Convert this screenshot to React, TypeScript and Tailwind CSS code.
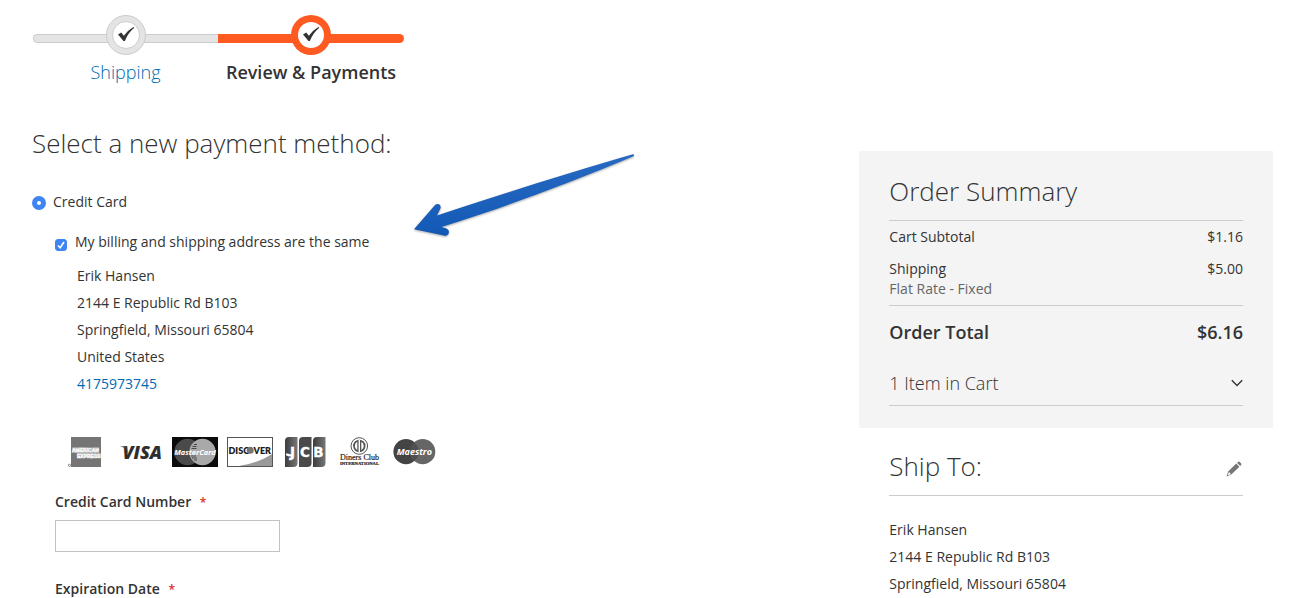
import React, { useState } from 'react';

const address = ['Erik Hansen', '2144 E Republic Rd B103', 'Springfield, Missouri 65804'];

function StepCheck() {
  return (
    <svg viewBox="0 0 18 16" className="mb-0.5 h-4 w-[18px]" aria-hidden="true">
      <path d="M1 8.400 4.200 6.600 6.900 9.800C9.200 6.400 12.300 3.200 16.600.9L17.300 1.800C13 5.400 10.200 9.300 7.900 14.900L6.500 14.900Z" fill="#333" />
    </svg>
  );
}

function Steps() {
  return (
    <ol className="flex pl-px text-lg leading-6">
      <li className="flex w-[185px] flex-col items-center">
        <div className="grid w-full items-center justify-items-center">
          <span className="col-start-1 row-start-1 mt-[7px] h-[9px] w-full rounded-l-md border border-r-0 border-[#ccc] bg-[#e4e4e4]" />
          <span className="col-start-1 row-start-1 flex size-10 items-center justify-center rounded-full border border-[#ccc] bg-[#e4e4e4]">
            <span className="flex size-7 items-center justify-center rounded-full border border-[#ccc] bg-white">
              <StepCheck />
            </span>
          </span>
        </div>
        <a href="#shipping" className="mt-[5px] font-light text-[#006bb4]">Shipping</a>
      </li>
      <li className="flex w-[186px] flex-col items-center" aria-current="step">
        <div className="grid w-full items-center justify-items-center">
          <span className="col-start-1 row-start-1 mt-[7px] h-[9px] w-full rounded-r-md bg-[#ff5a22]" />
          <span className="col-start-1 row-start-1 flex size-10 items-center justify-center rounded-full bg-[#ff5a22]">
            <span className="flex size-[26px] items-center justify-center rounded-full bg-white">
              <StepCheck />
            </span>
          </span>
        </div>
        <span className="mt-[5px] whitespace-nowrap font-semibold">Review &amp; Payments</span>
      </li>
    </ol>
  );
}

function Arrow() {
  return (
    <svg
      viewBox="410 150 230 92"
      className="pointer-events-none absolute left-[378px] top-[66px] h-[92px] w-[230px] drop-shadow-[0_1px_1px_rgba(0,0,0,0.35)]"
      aria-hidden="true"
    >
      <defs>
        <linearGradient id="arrow" x1="0" y1="0" x2="0.25" y2="1">
          <stop offset="0" stopColor="#2f6fc6" />
          <stop offset="1" stopColor="#1057b4" />
        </linearGradient>
      </defs>
      <path
        d="M414 229.300 434.800 205.200C437.500 202.400 442 204.800 440.300 208.800L437 215.500C500 195 570 172 633 154.200Q635 154.500 633.500 156.200C570 183 505 207 441.500 227L446.500 228.600C450.500 230.200 449.200 236 445 235.800Z"
        fill="url(#arrow)"
      />
    </svg>
  );
}

function CardLogo({ name, children }: { name: string; children: React.ReactNode }) {
  return (
    <li>
      <svg viewBox="0 0 46 30" className="h-[30px] w-[46px]" role="img" aria-label={name}>
        {children}
      </svg>
    </li>
  );
}

function CardLogos() {
  return (
    <ul className="mt-10 ml-[30px] flex gap-[9px]">
      <CardLogo name="American Express">
        <rect x="9" width="30" height="30" fill="#757575" />
        <rect x="10" y="10.500" width="27" height="5.500" fill="#a8a8a8" />
        <rect x="15" y="16" width="24" height="5" fill="#a8a8a8" />
        <g fill="#666" stroke="#f4f4f4" strokeWidth=".7" fontFamily="Liberation Sans, sans-serif" fontWeight="700" fontSize="5">
          <text x="10" y="15.200">AMERICAN</text>
          <text x="15" y="20.500">EXPRESS</text>
        </g>
        <circle cx="7.500" cy="28.300" r="1.100" fill="none" stroke="#777" strokeWidth=".9" />
      </CardLogo>
      <CardLogo name="Visa">
        <defs>
          <linearGradient id="visa" x1="0" x2="1" y1="0" y2="1">
            <stop offset="0" stopColor="#777" />
            <stop offset=".25" stopColor="#2e2e2e" />
          </linearGradient>
        </defs>
        <path d="M3 9h5.500l1.500 1.500 1 6C9 12.500 6.500 10.300 3 9Z" fill="#8a8a8a" />
        <text x="5.500" y="22" fontFamily="Open Sans, sans-serif" fontStyle="italic" fontWeight="800" fontSize="18" fill="url(#visa)">
          VISA
        </text>
      </CardLogo>
      <CardLogo name="MasterCard">
        <rect width="46" height="30" fill="#0b0b0b" />
        <circle cx="15.500" cy="15" r="13.200" fill="#4a4a4a" />
        <circle cx="30.500" cy="15" r="13.200" fill="#a9a9a9" />
        <path d="M22 7.500h3M20.500 9.500h4M19.500 11.500h5M19 19h5M20 21h5M22 23h3" stroke="#4a4a4a" strokeWidth="1" />
        <text x="23" y="18" textAnchor="middle" fontFamily="Open Sans, sans-serif" fontStyle="italic" fontWeight="700" fontSize="7.500" fill="#fff">
          MasterCard
        </text>
      </CardLogo>
      <CardLogo name="Discover">
        <rect x=".5" y=".5" width="45" height="29" fill="#fff" stroke="#555" />
        <path d="M45 17C36 23 25 27 12 29H45Z" fill="#9a9a9a" />
        <g fontFamily="Lato, sans-serif" fontWeight="800" fontSize="9" fill="#1c1c1c">
          <text x="1.500" y="16.500">DISC</text>
          <text x="26.500" y="16.500">VER</text>
        </g>
        <circle cx="23.200" cy="13.300" r="3.500" fill="#777" />
      </CardLogo>
      <CardLogo name="JCB">
        <defs>
          <linearGradient id="jcb" x1="0" x2="1">
            <stop offset="0" stopColor="#3c3c3c" />
            <stop offset="1" stopColor="#777" />
          </linearGradient>
        </defs>
        <path d="M7 0h8.500v26a4 4 0 0 1-4 4H3V4a4 4 0 0 1 4-4Z" fill="url(#jcb)" />
        <path d="M21 0h8.500v26a4 4 0 0 1-4 4H17V4a4 4 0 0 1 4-4Z" fill="#4a4a4a" />
        <path d="M35 0h8.500v26a4 4 0 0 1-4 4H31V4a4 4 0 0 1 4-4Z" fill="url(#jcb)" />
        <g fontFamily="DejaVu Sans, sans-serif" fontWeight="700" fontSize="13.500" fill="#fff" stroke="#fff" strokeWidth=".3" textAnchor="middle">
          <text x="10.500" y="19.500">J</text>
          <text x="23" y="19.500">C</text>
          <text x="36.500" y="19.500">B</text>
        </g>
        <path d="M4 16.500V18.200Q7.500 20.200 11 19V16.800Q7.500 18 6 16.500Z" fill="#fff" />
      </CardLogo>
      <CardLogo name="Diners Club International">
        <circle cx="22.300" cy="9" r="8.300" fill="#fff" stroke="#555" strokeWidth="1" />
        <circle cx="22.300" cy="9" r="6.200" fill="#555" />
        <path d="M20.300 4.800a4.800 4.800 0 0 0 0 8.400ZM24.300 4.800a4.800 4.800 0 0 1 0 8.400Z" fill="#fff" />
        <path d="M22.300 3v12" stroke="#fff" strokeWidth="1.400" />
        <g fontFamily="Liberation Serif, serif" fill="#222" stroke="#222" strokeWidth=".2" textAnchor="middle">
          <text x="22.500" y="22.500" fontSize="8">Diners Club</text>
          <text x="22.500" y="27.800" fontSize="4.600" fontWeight="700">INTERNATIONAL</text>
        </g>
      </CardLogo>
      <CardLogo name="Maestro">
        <circle cx="14" cy="14.700" r="12.600" fill="#444" />
        <circle cx="30.700" cy="14.700" r="12.600" fill="#666" />
        <path d="M22.300 5.200a12.600 12.600 0 0 1 0 19 12.600 12.600 0 0 1 0-19Z" fill="#505050" />
        <text x="22.300" y="17.500" textAnchor="middle" fontFamily="Open Sans, sans-serif" fontStyle="italic" fontWeight="700" fontSize="9" fill="#fff">
          Maestro
        </text>
      </CardLogo>
    </ul>
  );
}

function PaymentMethod() {
  const [sameAddress, setSameAddress] = useState(true);
  return (
    <section className="relative min-w-0 flex-1 pt-[41px]">
      <h1 className="text-[26px] font-light leading-9">Select a new payment method:</h1>
      <Arrow />
      <div className="mt-[31px] flex items-center gap-[7px]">
        <input
          id="credit-card"
          type="radio"
          name="method"
          defaultChecked
          className="mt-0.5 size-3.5 appearance-none rounded-full border-[5px] border-[#3f84f3] bg-white"
        />
        <label htmlFor="credit-card" className="leading-5">Credit Card</label>
      </div>
      <div className="ml-[23px] mt-5 flex items-center gap-2">
        <span className="mt-1.5 grid size-3 place-items-center">
          <input
            id="same-address"
            type="checkbox"
            checked={sameAddress}
            onChange={(e) => setSameAddress(e.target.checked)}
            className="peer col-start-1 row-start-1 size-3 appearance-none rounded-[3px] border border-[#3f84f3] checked:bg-[#3f84f3]"
          />
          <svg
            viewBox="0 0 12 12"
            className="pointer-events-none invisible col-start-1 row-start-1 size-3 peer-checked:visible"
            aria-hidden="true"
          >
            <path d="M3 6.500 5.200 8.700 9 3" fill="none" stroke="#fff" strokeWidth="1.600" />
          </svg>
        </span>
        <label htmlFor="same-address" className="leading-5">My billing and shipping address are the same</label>
      </div>
      <address className="ml-[45px] mt-2.5 not-italic leading-[27px]">
        {address.map((line) => (
          <p key={line}>{line}</p>
        ))}
        <p>United States</p>
        <a href="tel:4175973745" className="block w-fit text-[#006bb4]">4175973745</a>
      </address>
      <CardLogos />
      <div className="ml-[23px] mt-[26px]">
        <label htmlFor="card-number" className="block font-semibold leading-[18px]">
          Credit Card Number <span className="ml-[5px] text-xs text-[#e02b27]">*</span>
        </label>
        <input id="card-number" type="text" className="mt-[9px] block h-8 w-[225px] border border-[#c2c2c2] bg-white px-2" />
        <p className="mt-7 font-semibold leading-[18px]">
          Expiration Date <span className="ml-[5px] text-xs text-[#e02b27]">*</span>
        </p>
      </div>
    </section>
  );
}

function OrderSummary() {
  return (
    <aside className="mt-[67px] w-1/3">
      <section className="bg-[#f4f4f4] px-[30px] pb-[22px] pt-[22px]">
        <h2 className="border-b border-[#ccc] pb-[11px] text-[26px] font-light leading-9">Order Summary</h2>
        <table className="w-full leading-5">
          <tbody>
            <tr>
              <th scope="row" className="pb-1.5 pt-1.5 text-left font-normal">Cart Subtotal</th>
              <td className="pb-1.5 pt-1.5 text-right">$1.16</td>
            </tr>
            <tr className="border-b border-[#ccc] align-top">
              <th scope="row" className="pb-1.5 pt-1.5 text-left font-normal">
                <span className="block">Shipping</span>
                <span className="block text-[#666]">Flat Rate - Fixed</span>
              </th>
              <td className="pb-1.5 pt-1.5 text-right">$5.00</td>
            </tr>
            <tr className="text-lg leading-6">
              <th scope="row" className="pt-3.5 text-left font-semibold">Order Total</th>
              <td className="pt-3.5 text-right font-semibold">$6.16</td>
            </tr>
          </tbody>
        </table>
        <button
          type="button"
          className="mt-[27px] flex w-full items-center justify-between border-b border-[#ccc] pb-2.5 text-left text-lg font-light leading-6"
        >
          1 Item in Cart
          <svg viewBox="0 0 12 8" className="h-2 w-3" aria-hidden="true">
            <path d="M.8 1.200 6 6.400 11.200 1.200" fill="none" stroke="#333" strokeWidth="1.400" />
          </svg>
        </button>
      </section>
      <section className="px-[30px] pt-5">
        <div className="flex items-center justify-between border-b border-[#ccc] pb-[11px]">
          <h2 className="text-[26px] font-light leading-9">Ship To:</h2>
          <button type="button" aria-label="Edit shipping address" className="mr-px mt-1.5">
            <svg viewBox="0 0 16 16" className="size-4" aria-hidden="true">
              <path d="M10.200 2.600 13.400 5.800 5.300 13.400.6 15.500 2.200 10.600Z" fill="#757575" />
              <path d="M11 1.800 12.300.8Q13 .3 13.700.9L15.200 2.400Q15.800 3.100 15.200 3.800L14.200 5Z" fill="#757575" />
              <path d="M3 11 5 13.100 2.500 14.200 1.900 13.600Z" fill="#fff" />
            </svg>
          </button>
        </div>
        <address className="mt-5 not-italic leading-[27px]">
          {address.map((line) => (
            <p key={line}>{line}</p>
          ))}
        </address>
      </section>
    </aside>
  );
}

export default function App() {
  return (
    <div className="bg-white pl-8 pr-[18px] pt-[15px] font-['Open_Sans',sans-serif] text-sm text-[#333]">
      <Steps />
      <main className="flex items-start">
        <PaymentMethod />
        <OrderSummary />
      </main>
    </div>
  );
}
